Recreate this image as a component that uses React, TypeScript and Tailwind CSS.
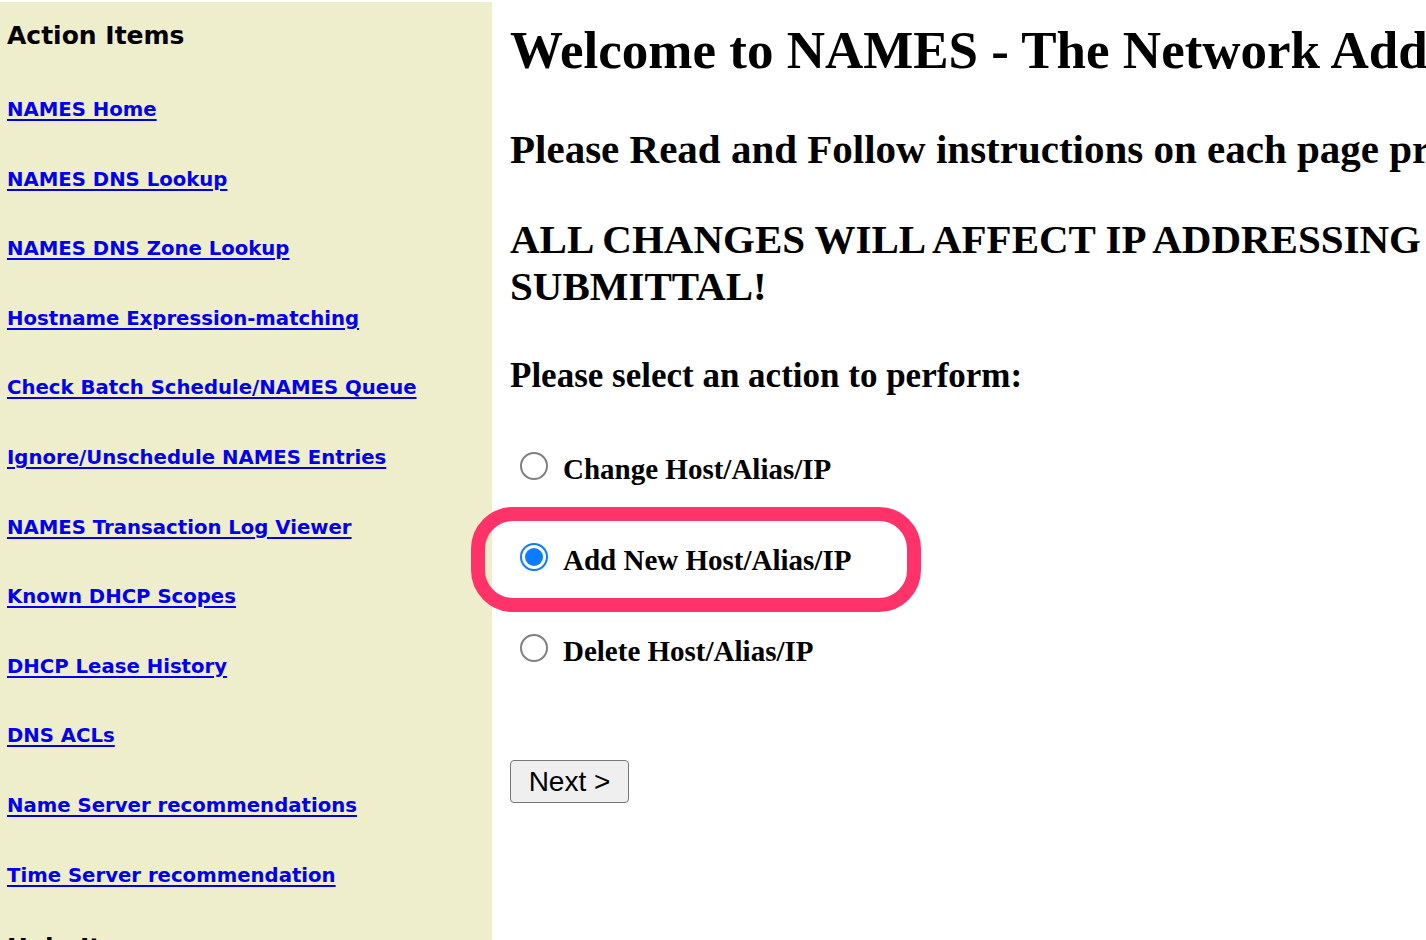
import React from "react";

const links = [
  "NAMES Home",
  "NAMES DNS Lookup",
  "NAMES DNS Zone Lookup",
  "Hostname Expression-matching",
  "Check Batch Schedule/NAMES Queue",
  "Ignore/Unschedule NAMES Entries",
  "NAMES Transaction Log Viewer",
  "Known DHCP Scopes",
  "DHCP Lease History",
  "DNS ACLs",
  "Name Server recommendations",
  "Time Server recommendation",
];

function Radio({ checked }: { checked?: boolean }) {
  if (checked) {
    return (
      <span className="flex h-[28px] w-[28px] shrink-0 items-center justify-center rounded-full border-[2px] border-[#0b7bff] bg-white">
        <span className="h-[18px] w-[18px] rounded-full bg-[#0b7bff]" />
      </span>
    );
  }
  return <span className="block h-[28px] w-[28px] shrink-0 rounded-full border-[2px] border-[#808080] bg-white" />;
}

export default function App() {
  const serif = "font-['Liberation_Serif','Times_New_Roman',serif]";
  return (
    <div className="relative flex h-[940px] w-[1426px] overflow-hidden bg-white">
      <div className="mt-[2px] w-[492px] shrink-0 bg-[#eeeecc] pl-[7px] pt-[20px] font-['DejaVu_Sans','Verdana',sans-serif] font-bold">
        <div className="text-[25px] leading-[28px] text-black">Action Items</div>
        <div className="mt-[25px]">
          {links.map((l) => (
            <div key={l} className="text-[19.7px] leading-[69.6px]">
              <a href="#" className="text-[#0000ee] underline decoration-[2px] underline-offset-[3px]">
                {l}
              </a>
            </div>
          ))}
        </div>
        <div className="mt-[24px] text-[25px] leading-[28px] text-black">Help Items</div>
      </div>

      <div className={`${serif} min-w-0 flex-1 pl-[18px] font-bold text-black`}>
        <div className="mt-[19px] whitespace-nowrap text-[53px] leading-[62px]">
          Welcome to NAMES - The Network Address Management System
        </div>
        <div className="mt-[44px] whitespace-nowrap text-[41px] leading-[48px]">
          Please Read and Follow instructions on each page prior to submitting
        </div>
        <div className="mt-[43px] whitespace-nowrap text-[41px] leading-[47px]">
          ALL CHANGES WILL AFFECT IP ADDRESSING IMMEDIATELY UPON
          <br />
          SUBMITTAL!
        </div>
        <div className="mt-[46px] whitespace-nowrap text-[35px] leading-[40px]">
          Please select an action to perform:
        </div>

        <div className="mt-[55px] flex flex-col gap-[61px] pl-[10px]">
          <label className="flex items-center gap-[15px] text-[29px] leading-[30px]">
            <Radio />
            <span className="translate-y-[3px]">Change Host/Alias/IP</span>
          </label>
          <label className="flex items-center gap-[15px] text-[29px] leading-[30px]">
            <Radio checked />
            <span className="translate-y-[3px]">Add New Host/Alias/IP</span>
          </label>
          <label className="flex items-center gap-[15px] text-[29px] leading-[30px]">
            <Radio />
            <span className="translate-y-[3px]">Delete Host/Alias/IP</span>
          </label>
        </div>

        <button className="mt-[97px] flex h-[43px] w-[119px] items-center justify-center rounded-[4px] border-[1.5px] border-[#767676] bg-[#efefef] font-['Liberation_Sans','Arial',sans-serif] text-[28px] font-normal text-black">
          Next &gt;
        </button>
      </div>

      <div className="pointer-events-none absolute left-[471px] top-[507px] h-[105px] w-[450px] rounded-[42px] border-[14px] border-[#ff3369]" />
    </div>
  );
}
